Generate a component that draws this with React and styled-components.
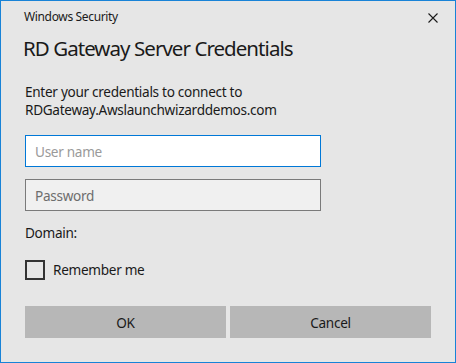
import styled, { createGlobalStyle } from 'styled-components'

const Global = createGlobalStyle`
  html, body {
    margin: 0;
    padding: 0;
    background: #ffffff;
  }
  * {
    box-sizing: border-box;
  }
`

export default function App() {
  return (
    <>
      <Global />
      <Window>
        <Header>
          <Caption>Windows Security</Caption>
          <CloseButton aria-label="Close">
            <svg width="10" height="10" viewBox="0 0 10 10">
              <path d="M0.5 0.5 L9.5 9.5 M9.5 0.5 L0.5 9.5" stroke="#1a1a1a" strokeWidth="1.1" fill="none" />
            </svg>
          </CloseButton>
        </Header>

        <Body>
          <Title>RD Gateway Server Credentials</Title>
          <Message>
            Enter your credentials to connect to
            <br />
            RDGateway.Awslaunchwizarddemos.com
          </Message>

          <Fields>
            <Input focused placeholder="User name" />
            <Input placeholder="Password" type="password" />
          </Fields>

          <Label>Domain:</Label>

          <CheckRow>
            <CheckBox />
            <CheckText>Remember me</CheckText>
          </CheckRow>

          <Buttons>
            <Button>OK</Button>
            <Button>Cancel</Button>
          </Buttons>
        </Body>
      </Window>
    </>
  )
}

const font = `"Segoe UI", "Noto Sans", "Liberation Sans", sans-serif`

const Window = styled.div`
  width: 456px;
  height: 363px;
  background: #e6e6e6;
  border: 1px solid #1883d7;
  display: flex;
  flex-direction: column;
  font-family: ${font};
  color: #1a1a1a;
`

const Header = styled.div`
  display: flex;
  align-items: center;
  justify-content: space-between;
  height: 32px;
  padding: 0 16px 0 23px;
`

const Caption = styled.span`
  font-size: 12px;
  line-height: 16px;
  letter-spacing: -0.35px;
  color: #1a1a1a;
`

const CloseButton = styled.div`
  width: 12px;
  height: 12px;
  display: flex;
  align-items: center;
  justify-content: center;
  margin-top: 2px;
`

const Body = styled.div`
  display: flex;
  flex-direction: column;
  padding: 0 24px 0 24px;
`

const Title = styled.div`
  font-size: 20.5px;
  line-height: 28px;
  letter-spacing: -0.95px;
  margin: 1px 0 0 -2px;
  color: #1a1a1a;
`

const Message = styled.div`
  font-size: 13.6px;
  line-height: 17.5px;
  letter-spacing: -0.3px;
  margin-top: 21px;
  color: #1a1a1a;
`

const Fields = styled.div`
  display: flex;
  flex-direction: column;
  gap: 12px;
  margin-top: 17px;
`

const Input = styled.input`
  width: 296px;
  height: 32px;
  padding: 0 9px;
  font-family: ${font};
  font-size: 13.6px;
  letter-spacing: -0.3px;
  outline: none;
  border: 1px solid ${({ focused }) => (focused ? '#0078d7' : '#7a7a7a')};
  background: ${({ focused }) => (focused ? '#ffffff' : '#f0f0f0')};
  color: #1a1a1a;

  &::placeholder {
    color: ${({ focused }) => (focused ? '#9a9a9a' : '#6d6d6d')};
  }
`

const Label = styled.div`
  font-size: 13.6px;
  line-height: 18px;
  letter-spacing: -0.3px;
  margin-top: 13px;
`

const CheckRow = styled.div`
  display: flex;
  align-items: center;
  gap: 8px;
  margin-top: 18px;
`

const CheckBox = styled.div`
  width: 20px;
  height: 20px;
  border: 2px solid #333333;
  background: transparent;
`

const CheckText = styled.span`
  font-size: 13.6px;
  line-height: 18px;
  letter-spacing: -0.3px;
`

const Buttons = styled.div`
  display: grid;
  grid-template-columns: 1fr 1fr;
  gap: 4px;
  margin-top: 26px;
`

const Button = styled.div`
  height: 32px;
  background: #b7b7b7;
  display: flex;
  align-items: center;
  justify-content: center;
  font-size: 13.6px;
  letter-spacing: -0.3px;
  color: #1a1a1a;
`
